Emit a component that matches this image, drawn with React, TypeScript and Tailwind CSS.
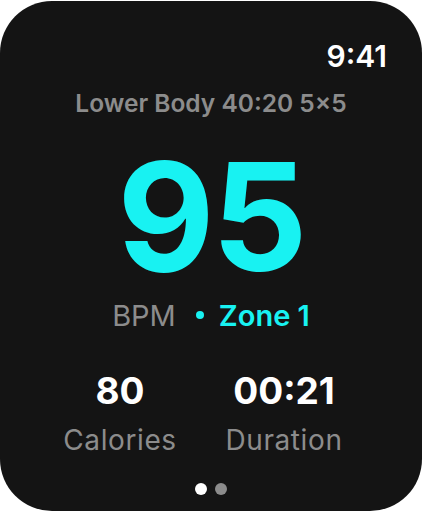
export default function App() {
  return (
    <div className="h-[514px] w-[422px] bg-white" style={{ fontFamily: 'Inter, "Noto Sans", sans-serif' }}>
      <div className="mt-px flex h-[510px] w-[422px] flex-col rounded-[52px] bg-[#141414]">
        {/* status bar */}
        <div className="mt-[40px] flex justify-end pr-[35px]">
          <span className="text-[30px] font-semibold leading-none text-white">9:41</span>
        </div>

        <div className="mt-[20px] text-center text-[24.5px] font-semibold leading-none text-[#8c8c8c]">
          Lower Body 40:20 5×5
        </div>

        {/* heart rate */}
        <div className="mt-[42px] text-center text-[150px] font-bold leading-[118px] tracking-[-3px] text-[#18f2f2]">
          95
        </div>

        <div className="mt-[25px] flex items-center justify-center text-[29px] leading-none">
          <span className="text-[#8c8c8c]">BPM</span>
          <span className="ml-[20px] mr-[15px] h-[8px] w-[8px] rounded-full bg-[#18f2f2]" />
          <span className="font-semibold text-[#18f2f2]">Zone 1</span>
        </div>

        {/* stats */}
        <div className="mt-[42px] flex gap-[24px] pl-[50px]">
          <div className="flex w-[140px] flex-col items-center">
            <span className="text-[37px] font-bold leading-none text-white">80</span>
            <span className="mt-[17px] text-[28px] leading-none tracking-[0.6px] text-[#8c8c8c]">Calories</span>
          </div>
          <div className="flex w-[140px] flex-col items-center">
            <span className="text-[37px] font-bold leading-none text-white">00:21</span>
            <span className="mt-[17px] text-[28px] leading-none tracking-[0.6px] text-[#8c8c8c]">Duration</span>
          </div>
        </div>

        {/* page dots */}
        <div className="mt-[29px] flex justify-center gap-[8px]">
          <span className="h-[12px] w-[12px] rounded-full bg-white" />
          <span className="h-[12px] w-[12px] rounded-full bg-[#8c8c8c]" />
        </div>
      </div>
    </div>
  );
}
